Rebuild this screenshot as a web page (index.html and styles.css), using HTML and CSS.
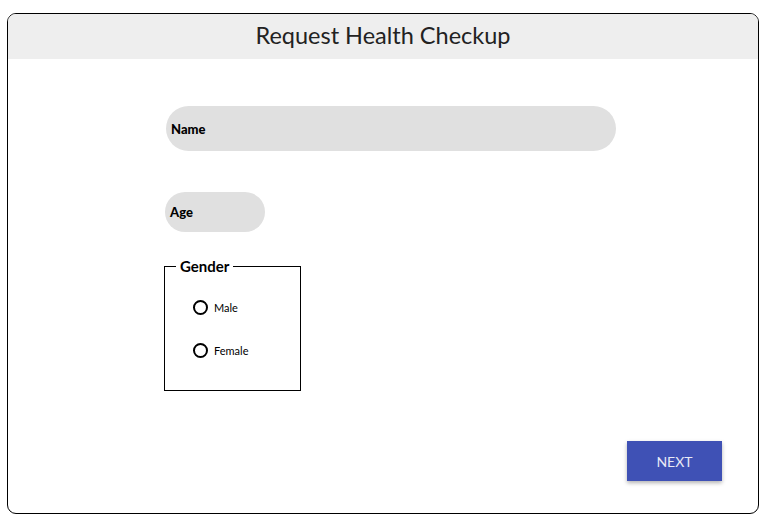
FILE: index.html
```html
<!DOCTYPE html>
<html>
<head>
<meta charset="utf-8">
<link rel="stylesheet" href="styles.css">
</head>
<body>
<div class="card">
  <div class="header">Request Health Checkup</div>
  <div class="content">
    <div class="field field-name"><span class="label">Name</span></div>
    <div class="field field-age"><span class="label">Age</span></div>
    <fieldset class="gender">
      <legend>Gender</legend>
      <div class="options">
        <div class="radio"><span class="circle"></span><span class="rlabel">Male</span></div>
        <div class="radio"><span class="circle"></span><span class="rlabel">Female</span></div>
      </div>
    </fieldset>
    <div class="actions"><button class="next">NEXT</button></div>
  </div>
</div>
</body>
</html>
```
FILE: styles.css
```css
html, body {
  margin: 0;
  padding: 0;
  background: #fff;
  font-family: Lato, "Noto Sans", sans-serif;
}
.card {
  box-sizing: border-box;
  margin: 13px 0 0 7px;
  width: 752px;
  height: 501px;
  border: 1px solid #000;
  border-radius: 9px;
  overflow: hidden;
  display: flex;
  flex-direction: column;
}
.header {
  height: 45px;
  padding-bottom: 3px;
  box-sizing: border-box;
  background: #eeeeee;
  display: flex;
  align-items: center;
  justify-content: center;
  font-size: 23.5px;
  color: #222;
}
.content {
  flex: 1;
  display: flex;
  flex-direction: column;
  align-items: flex-start;
  padding: 47px 36px 32px 158px;
}
.field {
  box-sizing: border-box;
  background: #e0e0e0;
  display: flex;
  align-items: center;
  padding-left: 5px;
}
.label {
  font-weight: 900;
  font-size: 13px;
  color: #000;
}
.field-name {
  width: 450px;
  height: 45px;
  border-radius: 23px;
}
.field-age {
  margin-top: 41px;
  margin-left: -1px;
  width: 100px;
  height: 40px;
  border-radius: 20px;
}
.gender {
  box-sizing: border-box;
  margin: 25px 0 0 -2px;
  width: 137px;
  height: 134px;
  border: 1px solid #000;
  padding: 0;
  min-width: 0;
}
.gender legend {
  font-weight: 700;
  font-size: 15px;
  margin-left: 11px;
  padding: 0 4px;
  color: #000;
}
.options {
  padding: 24px 0 0 28px;
}
.radio {
  display: flex;
  align-items: center;
  height: 16px;
  margin-bottom: 27px;
}
.circle {
  box-sizing: border-box;
  width: 15px;
  height: 15px;
  border: 2px solid #000;
  border-radius: 50%;
}
.rlabel {
  margin-left: 6px;
  font-size: 11px;
  color: #000;
}
.actions {
  margin-top: auto;
  align-self: stretch;
  display: flex;
  justify-content: flex-end;
}
.next {
  width: 95px;
  height: 40px;
  border: none;
  background: #3f51b5;
  color: #e8eaf6;
  font-family: Lato, "Noto Sans", sans-serif;
  font-size: 14px;
  box-shadow: 0 2px 4px rgba(0,0,0,0.3);
}
```
